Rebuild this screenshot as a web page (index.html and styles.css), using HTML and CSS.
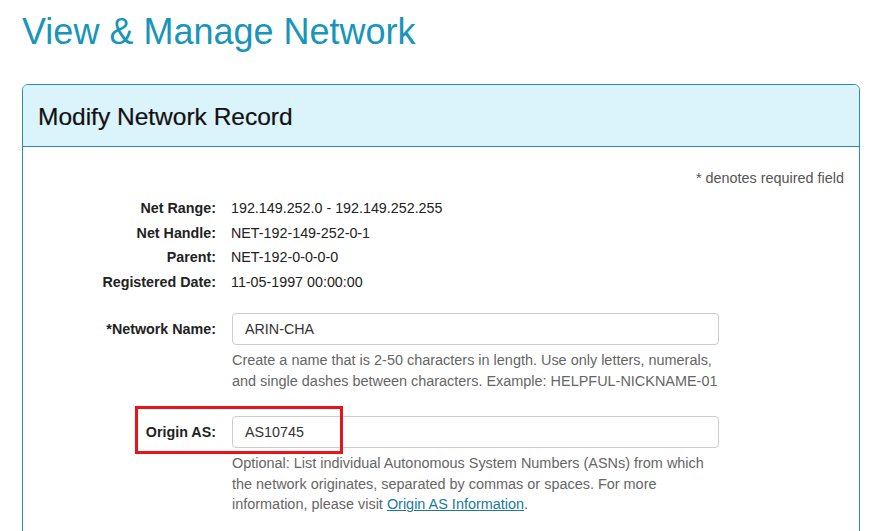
FILE: index.html
```html
<!DOCTYPE html>
<html>
<head>
<meta charset="utf-8">
<link rel="stylesheet" href="styles.css">
</head>
<body>
<h1 class="page-title">View &amp; Manage Network</h1>
<div class="card">
  <div class="card-header"><h2 class="card-title">Modify Network Record</h2></div>
  <div class="card-body">
    <p class="req-note">* denotes required field</p>
    <div class="info-grid">
      <div class="lbl">Net Range:</div><div class="val">192.149.252.0 - 192.149.252.255</div>
      <div class="lbl">Net Handle:</div><div class="val">NET-192-149-252-0-1</div>
      <div class="lbl">Parent:</div><div class="val">NET-192-0-0-0-0</div>
      <div class="lbl">Registered Date:</div><div class="val">11-05-1997 00:00:00</div>
    </div>
    <div class="field first">
      <label class="lbl field-lbl">*Network Name:</label>
      <div class="field-ctl">
        <div class="input">ARIN-CHA</div>
        <p class="help">Create a name that is 2-50 characters in length. Use only letters, numerals, and single dashes between characters. Example: HELPFUL-NICKNAME-01</p>
      </div>
    </div>
    <div class="field second">
      <span class="highlight"></span>
      <label class="lbl field-lbl">Origin AS:</label>
      <div class="field-ctl">
        <div class="input">AS10745</div>
        <p class="help">Optional: List individual Autonomous System Numbers (ASNs) from which the network originates, separated by commas or spaces. For more information, please visit <a href="#" class="link">Origin AS Information</a>.</p>
      </div>
    </div>
  </div>
</div>
</body>
</html>
```
FILE: styles.css
```css
html, body { margin: 0; padding: 0; background: #fff; }
body {
  font-family: "Liberation Sans", Arial, sans-serif;
  color: #212529;
  padding: 0 20px 0 22px;
  overflow: hidden;
  height: 531px;
}
.page-title {
  margin: 0;
  padding-top: 10px;
  font-size: 36px;
  font-weight: 400;
  line-height: 44px;
  color: #1895bb;
}
.card {
  margin-top: 30px;
  width: 836px;
  border: 1px solid #2b8ea8;
  border-radius: 6px;
  overflow: hidden;
  height: 600px;
}
.card-header {
  background: #dbf3fa;
  border-bottom: 1px solid #2b8ea8;
  height: 61px;
  display: flex;
  align-items: center;
  padding: 0 15px;
}
.card-title {
  margin: 0;
  font-size: 24.5px;
  font-weight: 400;
  color: #111;
  padding-top: 2px;
  -webkit-text-stroke: 0.2px #111;
}
.card-body { padding: 0 15px; position: relative; }
.req-note {
  margin: 0;
  padding-top: 23px;
  text-align: right;
  font-size: 14.4px;
  line-height: 16px;
  color: #555;
}
.info-grid {
  display: grid;
  grid-template-columns: 178px 1fr;
  column-gap: 15px;
  row-gap: 8px;
  margin-top: 14px;
  font-size: 14.3px;
  line-height: 16.5px;
}
.lbl { font-weight: 700; text-align: right; color: #222; font-size: 14.3px; }
.val { color: #222; }
.field {
  display: grid;
  grid-template-columns: 178px 487px;
  column-gap: 16px;
  position: relative;
}
.field.first { margin-top: 23px; }
.field.second { margin-top: 25px; }
.field-lbl { padding-top: 8px; line-height: 16px; }
.input {
  box-sizing: border-box;
  height: 32px;
  border: 1px solid #ccc;
  border-radius: 4px;
  padding: 0 12px;
  font-size: 14.3px;
  line-height: 30px;
  color: #333;
}
.help {
  margin: 5px 0 0;
  font-size: 14.45px;
  line-height: 20.5px;
  color: #666;
}
.link { color: #1a7a9a; text-decoration: underline; }
.highlight {
  position: absolute;
  left: 97px;
  top: -10px;
  width: 202px;
  height: 42px;
  border: 3px solid #e8141c;
  pointer-events: none;
}
```
